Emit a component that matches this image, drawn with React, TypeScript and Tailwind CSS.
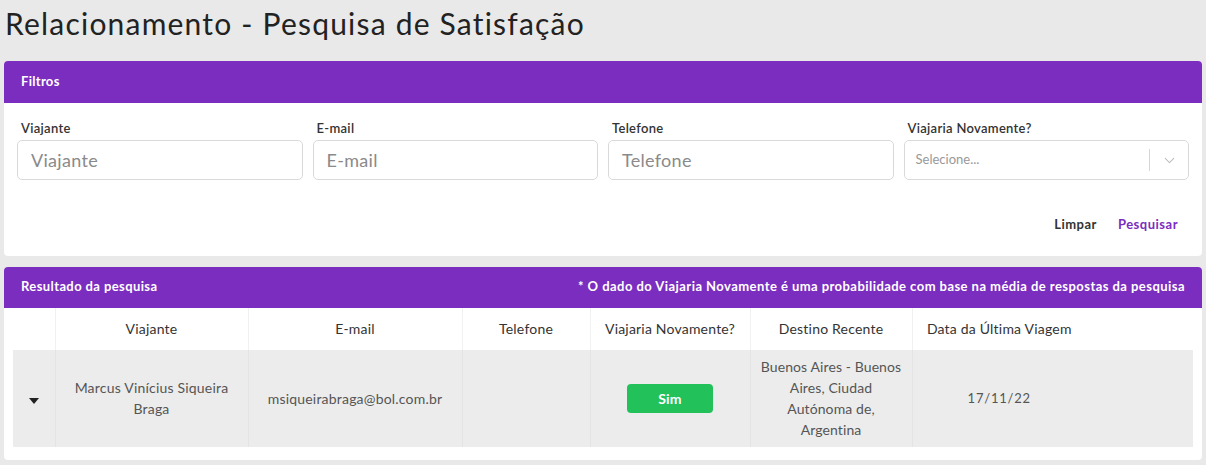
import { ChevronDown } from 'lucide-react';

const filters = [
  { label: 'Viajante', placeholder: 'Viajante' },
  { label: 'E-mail', placeholder: 'E-mail' },
  { label: 'Telefone', placeholder: 'Telefone' },
];

const columns = [
  { title: '', width: 'w-[42px]' },
  { title: 'Viajante', width: 'w-[193px]' },
  { title: 'E-mail', width: 'w-[214px]' },
  { title: 'Telefone', width: 'w-[128px]' },
  { title: 'Viajaria Novamente?', width: 'w-[160px]' },
  { title: 'Destino Recente', width: 'w-[162px]' },
  { title: 'Data da Última Viagem', width: 'w-[174px]' },
  { title: '', width: '' },
];

export default function App() {
  return (
    <div className="w-[1206px] h-[465px] bg-[#e9e9e9] px-[4px] pt-[4px] font-['Lato',sans-serif] text-[#333] overflow-hidden">
      <h1 className="text-[30px] leading-[38px] text-[#222] pl-[1px] tracking-[1.2px]">
        Relacionamento - Pesquisa de Satisfação
      </h1>

      <div className="mt-[19px] bg-white rounded-[4px] w-[1198px] overflow-hidden">
        <div className="h-[42px] bg-[#7b2dc0] flex items-center px-[17px]">
          <span className="text-white font-bold text-[13px] tracking-[0.3px]">Filtros</span>
        </div>
        <div className="px-[13px] pt-[17px] pb-[21px]">
          <div className="grid grid-cols-4 gap-[10px]">
            {filters.map((f) => (
              <div key={f.label} className="flex flex-col">
                <label className="text-[13px] font-semibold text-[#333] pl-[4px] mb-[4px] leading-[16px] tracking-[0.3px]">{f.label}</label>
                <input
                  placeholder={f.placeholder}
                  className="h-[40px] rounded-[5px] border border-[#d9d9d9] px-[13px] text-[18px] tracking-[0.3px] placeholder:text-[#8a8a8a] outline-none"
                />
              </div>
            ))}
            <div className="flex flex-col">
              <label className="text-[13px] font-semibold text-[#333] pl-[4px] mb-[4px] leading-[16px] tracking-[0.3px]">Viajaria Novamente?</label>
              <div className="h-[40px] rounded-[5px] border border-[#d9d9d9] flex items-center">
                <span className="flex-1 px-[11px] text-[13px] text-[#999]">Selecione...</span>
                <span className="w-px h-[22px] bg-[#d6d6d6]" />
                <span className="w-[38px] flex justify-center text-[#bdbdbd]">
                  <ChevronDown size={17} strokeWidth={1.5} />
                </span>
              </div>
            </div>
          </div>
          <div className="flex justify-end items-center gap-[21px] mt-[35px] pr-[11px]">
            <button className="text-[13px] font-bold text-[#333] tracking-[0.5px]">Limpar</button>
            <button className="text-[13px] font-bold text-[#7b2dc0] tracking-[0.5px]">Pesquisar</button>
          </div>
        </div>
      </div>

      <div className="mt-[11px] bg-white rounded-[4px] w-[1198px] overflow-hidden pb-[13px]">
        <div className="h-[41px] bg-[#7b2dc0] flex items-center justify-between px-[17px]">
          <span className="text-white font-bold text-[13px] tracking-[0.4px]">Resultado da pesquisa</span>
          <span className="text-white font-bold text-[13px] tracking-[0.45px]">
            * O dado do Viajaria Novamente é uma probabilidade com base na média de respostas da pesquisa
          </span>
        </div>
        <div className="px-[9px]">
          <table className="w-full table-fixed border-collapse text-[14px] tracking-[0.2px]">
            <thead>
              <tr className="h-[42px]">
                {columns.map((c, i) => (
                  <th
                    key={i}
                    className={`${c.width} font-normal text-[#333] text-center ${i < 6 ? 'border-r border-[#f1f1f1]' : ''}`}
                  >
                    {c.title}
                  </th>
                ))}
              </tr>
            </thead>
            <tbody>
              <tr className="h-[97px] bg-[#ececec] text-[#555] text-center leading-[21px]">
                <td className="border-r border-[#e4e4e4]">
                  <span className="inline-block w-0 h-0 border-l-[5px] border-r-[5px] border-t-[6px] border-l-transparent border-r-transparent border-t-[#222]" />
                </td>
                <td className="px-[12px] border-r border-[#e4e4e4]">Marcus Vinícius Siqueira Braga</td>
                <td className="px-[8px] border-r border-[#e4e4e4]">msiqueirabraga@bol.com.br</td>
                <td className="border-r border-[#e4e4e4]"></td>
                <td className="border-r border-[#e4e4e4]">
                  <span className="inline-flex items-center justify-center w-[86px] h-[29px] rounded-[4px] bg-[#22c15a] text-white font-bold">
                    Sim
                  </span>
                </td>
                <td className="px-[7px] tracking-[0.1px] border-r border-[#e4e4e4]">Buenos Aires - Buenos Aires, Ciudad Autónoma de, Argentina</td>
                <td className="text-[13px] tracking-[0.8px]">17/11/22</td>
                <td></td>
              </tr>
            </tbody>
          </table>
        </div>
      </div>
    </div>
  );
}
